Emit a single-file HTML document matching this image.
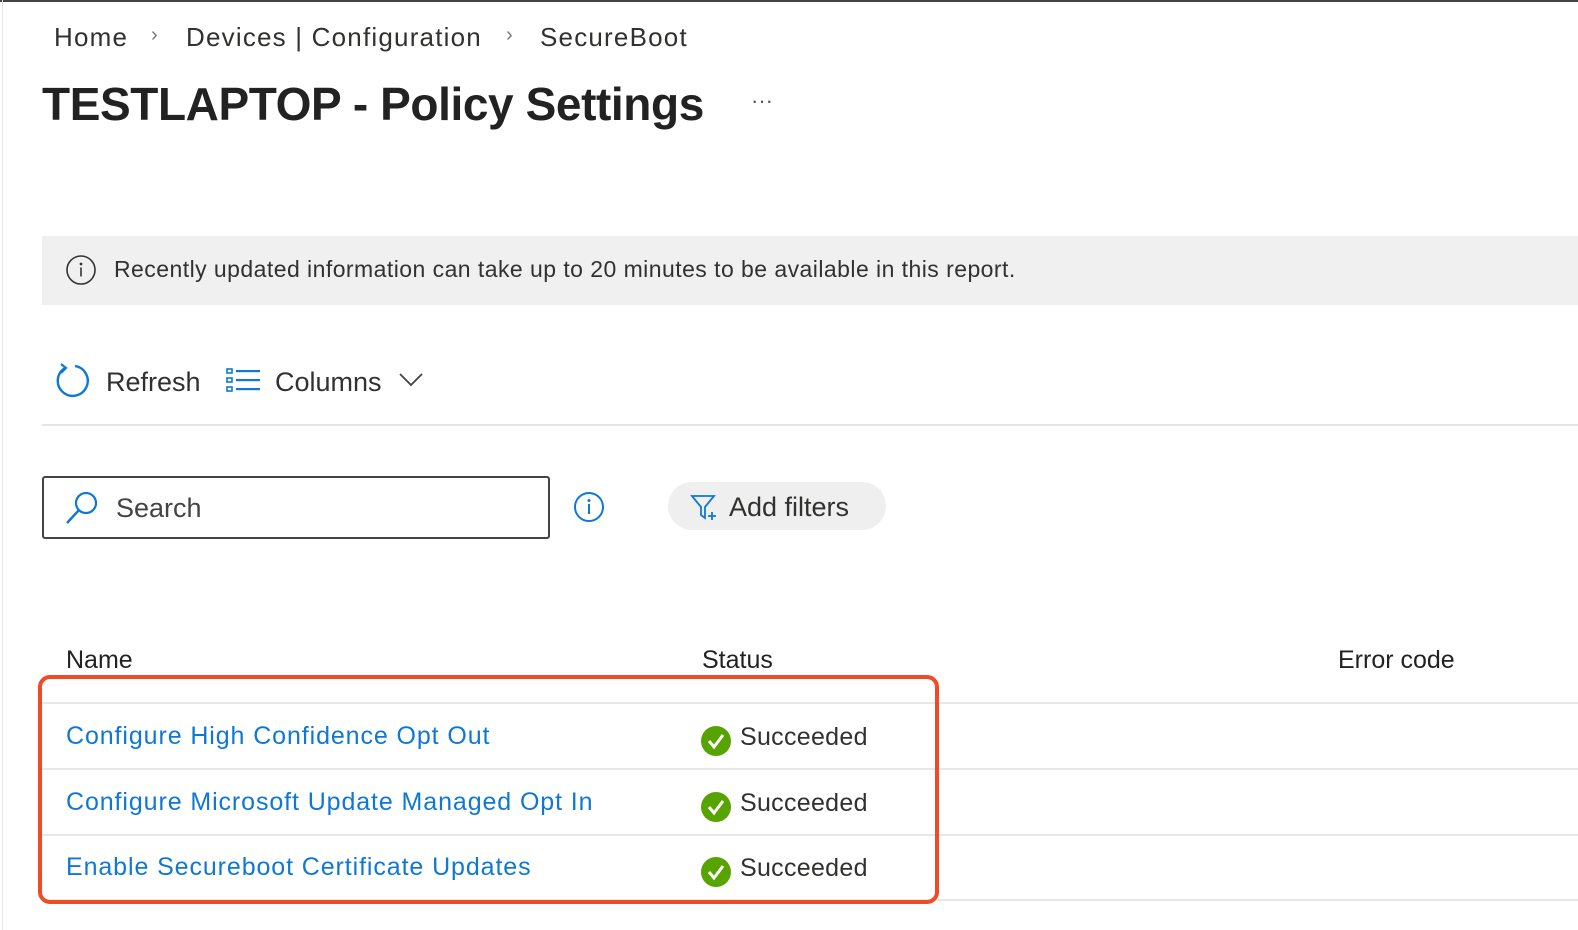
<!DOCTYPE html>
<html><head><meta charset="utf-8"><style>
*{margin:0;padding:0;box-sizing:border-box}
body{width:1578px;height:930px;background:#fff;position:relative;overflow:hidden;font-family:"Liberation Sans",sans-serif;color:#323130}
.a{position:absolute;white-space:nowrap}
.link{color:#0f78d4;font-size:25px;letter-spacing:0.9px}
.succ{font-size:25px;color:#323130;letter-spacing:0.3px}
.chk{position:absolute;width:30px;height:30px;border-radius:50%;background:#57a300}
.row{position:absolute;left:42px;right:0;height:2px;background:#e8e8e8}
.bc{font-size:26px;letter-spacing:1.2px}
</style></head><body>
<div class="a" style="left:0;top:0;width:1578px;height:2px;background:#444"></div>
<div class="a" style="left:2px;top:0;width:1px;height:930px;background:#e5e5e5"></div>

<div class="a bc" style="left:54px;top:22px">Home</div>
<div class="a" style="left:151px;top:24px;font-size:20px;color:#777">›</div>
<div class="a bc" style="left:186px;top:22px">Devices | Configuration</div>
<div class="a" style="left:506px;top:24px;font-size:20px;color:#777">›</div>
<div class="a bc" style="left:540px;top:22px">SecureBoot</div>

<div class="a" style="left:42px;top:77px;font-size:46px;font-weight:bold;color:#222;letter-spacing:-0.4px">TESTLAPTOP - Policy Settings</div>
<div class="a" style="left:751px;top:88px;font-size:22px;color:#555">···</div>

<div class="a" style="left:42px;top:236px;width:1536px;height:69px;background:#f0f0f0"></div>
<svg class="a" style="left:65px;top:254px" width="32" height="32" viewBox="0 0 32 32"><circle cx="16" cy="16" r="14" fill="none" stroke="#333" stroke-width="1.6"/><circle cx="16" cy="10" r="1.4" fill="#333"/><rect x="15.2" y="13.5" width="1.6" height="9" fill="#333"/></svg>
<div class="a" style="left:114px;top:256px;font-size:23px;color:#323130;letter-spacing:0.45px">Recently updated information can take up to 20 minutes to be available in this report.</div>

<svg class="a" style="left:55px;top:362px" width="36" height="38" viewBox="0 0 36 38"><path d="M10 6 A15 15 0 1 0 20 4" fill="none" stroke="#0f78d4" stroke-width="2.4"/><path d="M6 2 L11 6 L6 11" fill="none" stroke="#0f78d4" stroke-width="2.2"/></svg>
<div class="a" style="left:106px;top:367px;font-size:27px">Refresh</div>
<svg class="a" style="left:226px;top:368px" width="36" height="26" viewBox="0 0 36 26"><rect x="1" y="1" width="5" height="4" fill="none" stroke="#0f78d4" stroke-width="1.6"/><rect x="1" y="10" width="5" height="4" fill="none" stroke="#0f78d4" stroke-width="1.6"/><rect x="1" y="19" width="5" height="4" fill="none" stroke="#0f78d4" stroke-width="1.6"/><rect x="10" y="2" width="24" height="2.2" fill="#0f78d4"/><rect x="10" y="11" width="24" height="2.2" fill="#0f78d4"/><rect x="10" y="20" width="24" height="2.2" fill="#0f78d4"/></svg>
<div class="a" style="left:275px;top:367px;font-size:27px">Columns</div>
<svg class="a" style="left:398px;top:372px" width="26" height="16" viewBox="0 0 26 16"><path d="M2 2 L13 13 L24 2" fill="none" stroke="#444" stroke-width="1.8"/></svg>
<div class="a" style="left:42px;top:424px;width:1536px;height:2px;background:#e5e5e5"></div>

<div class="a" style="left:42px;top:476px;width:508px;height:63px;border:2px solid #444;border-radius:3px"></div>
<svg class="a" style="left:64px;top:490px" width="38" height="36" viewBox="0 0 38 36"><circle cx="22" cy="13" r="10" fill="none" stroke="#0f78d4" stroke-width="2.2"/><path d="M15 20 L3 33" stroke="#0f78d4" stroke-width="2.4"/></svg>
<div class="a" style="left:116px;top:493px;font-size:27px;color:#444">Search</div>
<svg class="a" style="left:573px;top:491px" width="32" height="32" viewBox="0 0 32 32"><circle cx="16" cy="16" r="14" fill="none" stroke="#0f78d4" stroke-width="2"/><circle cx="16" cy="9.5" r="1.5" fill="#0f78d4"/><rect x="15" y="13" width="2" height="10" fill="#0f78d4"/></svg>
<div class="a" style="left:668px;top:482px;width:218px;height:48px;background:#efefef;border-radius:24px"></div>
<svg class="a" style="left:690px;top:494px" width="30" height="28" viewBox="0 0 30 28"><path d="M2 2 H24 L15 13 V24 L11 21 V13 Z" fill="none" stroke="#0f78d4" stroke-width="1.8"/><path d="M18 22 H26 M22 18 V26" stroke="#0f78d4" stroke-width="1.8"/></svg>
<div class="a" style="left:729px;top:492px;font-size:27px">Add filters</div>

<div class="a" style="left:66px;top:646px;font-size:25px;color:#222">Name</div>
<div class="a" style="left:702px;top:646px;font-size:25px;color:#222">Status</div>
<div class="a" style="left:1338px;top:646px;font-size:25px;color:#222">Error code</div>

<div class="row" style="top:702px"></div>
<div class="row" style="top:768px"></div>
<div class="row" style="top:834px"></div>
<div class="row" style="top:899px"></div>

<div class="a link" style="left:66px;top:722px">Configure High Confidence Opt Out</div>
<div class="a link" style="left:66px;top:788px">Configure Microsoft Update Managed Opt In</div>
<div class="a link" style="left:66px;top:853px">Enable Secureboot Certificate Updates</div>

<div class="chk" style="left:701px;top:726px"></div>
<div class="chk" style="left:701px;top:792px"></div>
<div class="chk" style="left:701px;top:857px"></div>
<svg class="a" style="left:701px;top:726px" width="30" height="162" viewBox="0 0 30 162"><g fill="none" stroke="#fff" stroke-width="3"><path d="M8 15 L13 21 L22 9"/><path d="M8 81 L13 87 L22 75"/><path d="M8 146 L13 152 L22 140"/></g></svg>
<div class="a succ" style="left:740px;top:723px">Succeeded</div>
<div class="a succ" style="left:740px;top:789px">Succeeded</div>
<div class="a succ" style="left:740px;top:854px">Succeeded</div>

<div class="a" style="left:38px;top:675px;width:901px;height:229px;border:4px solid #f04a26;border-radius:12px"></div>
</body></html>
